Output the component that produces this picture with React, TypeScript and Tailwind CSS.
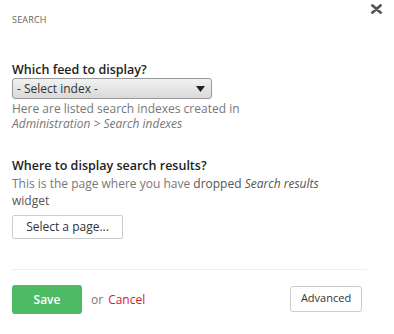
import React from "react";

export default function App() {
  return (
    <div className="w-[394px] h-[334px] bg-white relative" style={{ fontFamily: '"Open Sans", sans-serif' }}>
      <svg className="absolute left-[371px] top-[4px]" width="11" height="10" viewBox="0 0 11 10">
        <path d="M1.5 1.5L9.5 8.5M9.5 1.5L1.5 8.5" stroke="#555" strokeWidth="2.8" strokeLinecap="round" />
      </svg>
      <div className="px-[12px] pt-[14px]">
        <div className="text-[9px] text-[#666] leading-[12px] tracking-[0.2px]">SEARCH</div>
        <div className="mt-[36px] text-[12.5px] font-semibold text-[#222] leading-[16px]">Which feed to display?</div>
        <div className="w-[200px] h-[21px] border border-[#999] rounded-[3px] bg-gradient-to-b from-[#f2f2f2] to-[#d9d9d9] flex items-center justify-between pl-[4px] pr-[6px]">
          <span className="text-[12px] text-[#333] leading-none">- Select index -</span>
          <svg width="9" height="6" viewBox="0 0 9 6"><path d="M0 0h9L4.5 6z" fill="#222" /></svg>
        </div>
        <div className="text-[12px] text-[#777] leading-[15px] mt-[2px]">
          <div>Here are listed search indexes created in</div>
          <div className="italic">Administration &gt; Search indexes</div>
        </div>
        <div className="mt-[27px] text-[12.5px] font-semibold text-[#222] leading-[16px]">Where to display search results?</div>
        <div className="text-[12px] text-[#777] leading-[17px] mt-[1px]">
          <div>
            This is the page where you have <span className="text-[#555]">dropped</span>{" "}
            <span className="italic text-[#555]">Search results</span>
          </div>
          <div className="text-[#555]">widget</div>
        </div>
        <button className="block mt-[6px] h-[24px] w-[111px] border border-[#ccc] rounded-[2px] bg-white text-[12px] text-[#333] leading-none">Select a page...</button>
        <div className="mt-[30px] h-px bg-[#eee] w-[355px]" />
        <div className="mt-[15px] flex items-center w-[350px]">
          <button className="h-[29px] w-[70px] rounded-[3px] bg-[#4cbb64] text-white text-[12px] font-semibold">Save</button>
          <span className="ml-[9px] text-[12px] text-[#777]">or</span>
          <span className="ml-[5px] text-[12px] text-[#d0202e]">Cancel</span>
          <button className="ml-auto h-[26px] w-[72px] border border-[#ccc] rounded-[3px] bg-white text-[11px] text-[#333] -translate-y-[1px]">Advanced</button>
        </div>
      </div>
    </div>
  );
}
